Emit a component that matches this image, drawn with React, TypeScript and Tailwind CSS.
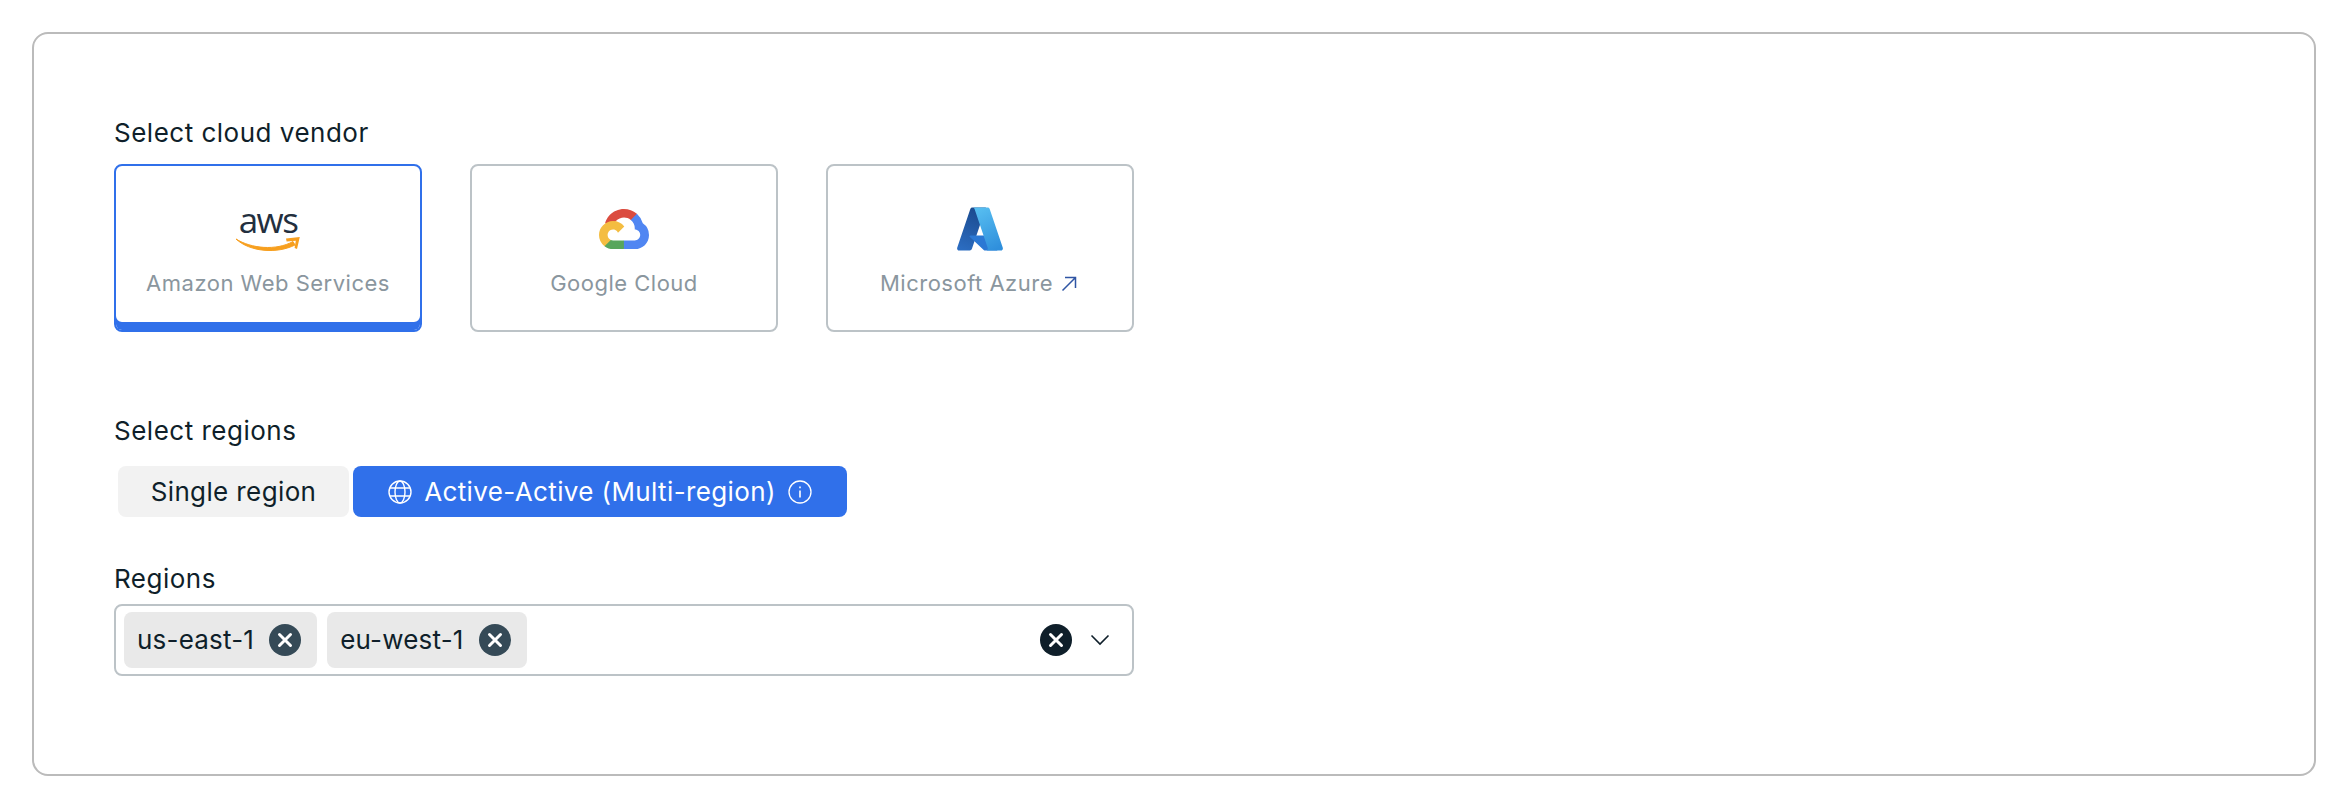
import React from "react";

const font = { fontFamily: "Inter, sans-serif" };

function XBadge({ color }: { color: string }) {
  return (
    <svg width="32" height="32" viewBox="0 0 32 32" className="shrink-0">
      <circle cx="16" cy="16" r="16" fill={color} />
      <path d="M10.5 10.5L21.5 21.5M21.5 10.5L10.5 21.5" stroke="#fff" strokeWidth="3" strokeLinecap="round" />
    </svg>
  );
}

function AwsLogo() {
  return (
    <div className="flex h-[50px] w-[66px] flex-col items-center">
      <div className="mt-[-1px] h-[34px] text-[35px] font-medium leading-[34px] tracking-[-1.5px] text-[#232f3e]" style={{ fontFamily: "'Open Sans', sans-serif" }}>
        aws
      </div>
      <svg width="66" height="16" viewBox="0 0 66 16" className="mt-[-1px]">
        <path d="M1 3C16 12.5 41 15 58 5.5L60 9C42 18 15 16 1 3Z" fill="#f79f1e" stroke="#f79f1e" strokeWidth="1" />
        <path d="M51 2.6L64.8 1L62 13L59.6 12L60.8 4.8L51.6 5.4Z" fill="#f79f1e" />
      </svg>
    </div>
  );
}

function GoogleLogo() {
  return (
    <svg width="50" height="50" viewBox="0 -25 256 256">
      <path fill="#DB4C3F" d="m170.252 56.819l22.253-22.253l1.483-9.37C153.437-11.677 88.976-7.496 52.42 33.92C42.267 45.423 34.734 59.764 30.717 74.573l7.97-1.123l44.505-7.34l3.436-3.513c19.797-21.742 53.27-24.667 76.128-6.168z" />
      <path fill="#5086F2" d="M224.205 73.918a100.249 100.249 0 0 0-30.217-48.722l-31.232 31.232a55.515 55.515 0 0 1 20.379 44.037v5.544c15.35 0 27.797 12.445 27.797 27.796c0 15.352-12.446 27.485-27.797 27.485h-55.671l-5.466 5.934v33.34l5.466 5.231h55.67c39.93.311 72.553-31.494 72.864-71.424a72.303 72.303 0 0 0-31.793-60.453" />
      <path fill="#58A65C" d="M71.87 205.796h55.593V161.29H71.87a27.628 27.628 0 0 1-11.399-2.498l-7.887 2.42l-22.409 22.253l-1.952 7.574c12.567 9.489 27.9 14.825 43.647 14.757" />
      <path fill="#F4BD41" d="M71.87 61.425C31.94 61.664-.237 94.228.001 134.159a72.301 72.301 0 0 0 28.222 56.88l32.248-32.246c-13.99-6.322-20.208-22.786-13.887-36.776c6.32-13.99 22.786-20.208 36.775-13.888a27.796 27.796 0 0 1 13.887 13.888l32.248-32.248A72.224 72.224 0 0 0 71.87 61.425" />
    </svg>
  );
}

function AzureLogo() {
  return (
    <svg width="50" height="50" viewBox="0 0 96 96">
      <defs>
        <linearGradient id="az-a" x1="60%" y1="0%" x2="30%" y2="100%">
          <stop offset="0" stopColor="#1b4a8e" />
          <stop offset="1" stopColor="#2b6cc0" />
        </linearGradient>
        <linearGradient id="az-c" x1="30%" y1="0%" x2="70%" y2="100%">
          <stop offset="0" stopColor="#56bdf0" />
          <stop offset="1" stopColor="#2f8fdc" />
        </linearGradient>
      </defs>
      <path d="M33.338 6.544h26.038l-27.03 80.087a4.152 4.152 0 0 1-3.933 2.824H8.149a4.145 4.145 0 0 1-3.928-5.47L29.404 9.368a4.152 4.152 0 0 1 3.934-2.825z" fill="url(#az-a)" />
      <path d="M71.175 60.261h-41.29a1.911 1.911 0 0 0-1.305 3.309l26.532 24.764a4.171 4.171 0 0 0 2.846 1.121h23.38z" fill="#2b78d4" />
      <path d="M66.595 9.364a4.145 4.145 0 0 0-3.928-2.82H33.648a4.146 4.146 0 0 1 3.928 2.82l25.184 74.62a4.146 4.146 0 0 1-3.928 5.472h29.02a4.146 4.146 0 0 0 3.927-5.472z" fill="url(#az-c)" />
    </svg>
  );
}

function VendorCard({ selected, logo, children }: { selected?: boolean; logo: React.ReactNode; children: React.ReactNode }) {
  return (
    <div
      className={
        selected
          ? "flex h-[168px] w-[308px] flex-col items-center rounded-[8px] border-2 border-[#3070ea] bg-white pt-[38px] shadow-[inset_0_-8px_0_#3070ea]"
          : "flex h-[168px] w-[308px] flex-col items-center rounded-[8px] border-2 border-[#bcc3c7] bg-white pt-[38px]"
      }
    >
      <div className="flex h-[50px] items-center justify-center">{logo}</div>
      <div className="mt-[13px] flex h-[32px] items-center text-[22px] leading-[32px] tracking-[0.5px] text-[#8a969e]">{children}</div>
    </div>
  );
}

function Tag({ label }: { label: string }) {
  return (
    <div className="flex h-[56px] items-center gap-[15px] rounded-[8px] bg-[#e9e9e9] pl-[13px] pr-[16px] text-[26px] tracking-[0.2px] text-[#0f1f2a]">
      <span className="pb-[2px]">{label}</span>
      <XBadge color="#354a57" />
    </div>
  );
}

export default function App() {
  return (
    <div className="min-h-[804px] bg-white py-[32px] pl-[32px] pr-[36px] text-[#0f1f2a]" style={font}>
      <div className="h-[744px] rounded-[16px] border-2 border-[#bbbbbb] px-[80px] pt-[83px]">
        <div className="mb-[15px] text-[26px] leading-[32px] tracking-[0.5px]">Select cloud vendor</div>
        <div className="flex gap-[48px]">
          <VendorCard selected logo={<AwsLogo />}>Amazon Web Services</VendorCard>
          <VendorCard logo={<GoogleLogo />}>Google Cloud</VendorCard>
          <VendorCard logo={<AzureLogo />}>
            <span>Microsoft Azure</span>
            <svg width="16" height="16" viewBox="0 0 16 16" className="ml-[8px] mr-[3px] mt-[1px]" fill="none" stroke="#2f55a4" strokeWidth="1.5">
              <path d="M1.5 14.5L14.5 1.5M4 1.5H14.5V12" />
            </svg>
          </VendorCard>
        </div>

        <div className="mb-[19px] mt-[83px] text-[26px] leading-[32px] tracking-[0.5px]">Select regions</div>
        <div className="ml-[4px] flex gap-[4px] tracking-[0.38px]">
          <div className="flex h-[51px] w-[231px] items-center justify-center rounded-[8px] bg-[#f2f2f2] text-[26px]">Single region</div>
          <div className="flex h-[51px] w-[494px] items-center justify-center gap-[12px] rounded-[8px] bg-[#3070ea] text-[26px] text-white">
            <svg width="24" height="24" viewBox="0 0 24 24" fill="none" stroke="#fff" strokeWidth="1.4">
              <circle cx="12" cy="12" r="11" />
              <ellipse cx="12" cy="12" rx="5" ry="11" />
              <path d="M2 8H22M2 16H22" />
            </svg>
            <span>Active-Active (Multi-region)</span>
            <svg width="24" height="24" viewBox="0 0 24 24" fill="none" stroke="#fff" strokeWidth="1.3">
              <circle cx="12" cy="12" r="11" />
              <path d="M12 10.5V17.5M12 6.5V8.2" strokeWidth="1.6" />
            </svg>
          </div>
        </div>

        <div className="mb-[9px] mt-[46px] text-[26px] leading-[32px] tracking-[0.5px]">Regions</div>
        <div className="flex h-[72px] w-[1020px] items-center rounded-[8px] border-2 border-[#bcc3c7] pl-[8px] pr-[22px]">
          <div className="flex flex-1 gap-[10px]">
            <Tag label="us-east-1" />
            <Tag label="eu-west-1" />
          </div>
          <XBadge color="#0f1f2a" />
          <svg width="20" height="12" viewBox="0 0 20 12" className="ml-[18px]" fill="none" stroke="#0f1f2a" strokeWidth="1.6">
            <path d="M1.5 1.5L10 10L18.5 1.5" />
          </svg>
        </div>
      </div>
    </div>
  );
}
